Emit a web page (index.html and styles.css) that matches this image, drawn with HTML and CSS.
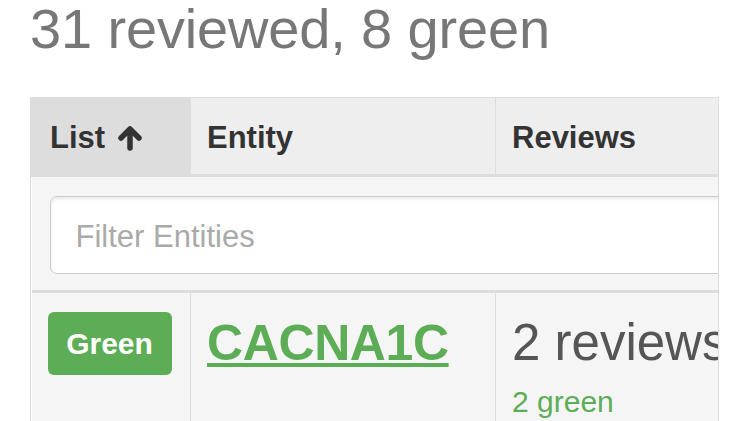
FILE: index.html
```html
<!DOCTYPE html>
<html>
<head>
<meta charset="utf-8">
<link rel="stylesheet" href="styles.css">
</head>
<body>
<h2 class="title">31 reviewed, 8 green</h2>
<div class="table-wrap">
  <table class="grid">
    <colgroup>
      <col class="c-list">
      <col class="c-entity">
      <col class="c-reviews">
    </colgroup>
    <thead>
      <tr class="head">
        <th class="sorted">List <svg class="arrow" viewBox="0 0 28 26" width="28" height="26"><path d="M14 23 V5 M5 13 L14 4 L23 13" fill="none" stroke="#333" stroke-width="5.5" stroke-linecap="round" stroke-linejoin="round"/></svg></th>
        <th>Entity</th>
        <th>Reviews</th>
      </tr>
      <tr class="filter">
        <td colspan="3"><input class="filter-input" type="text" placeholder="Filter Entities"></td>
      </tr>
    </thead>
    <tbody>
      <tr class="row">
        <td><span class="badge">Green</span></td>
        <td><a class="entity" href="#">CACNA1C</a></td>
        <td><div class="rev-count">2 reviews</div><div class="rev-green">2 green</div></td>
      </tr>
    </tbody>
  </table>
</div>
</body>
</html>
```

FILE: styles.css
```css
html, body {
  margin: 0;
  padding: 0;
  background: #fff;
}
body {
  padding: 0 31px 0 30px;
  font-family: "Liberation Sans", Arial, sans-serif;
  overflow: hidden;
}
.title {
  margin: 0;
  padding-top: 0;
  font-size: 56px;
  line-height: 57px;
  font-weight: normal;
  color: #777;
  height: 97px;
  white-space: nowrap;
  letter-spacing: -0.15px;
}
.table-wrap {
  width: 687px;
  border: 1px solid #ddd;
  overflow: hidden;
}
.grid {
  width: 1000px;
  table-layout: fixed;
  border-collapse: collapse;
}
.c-list { width: 159px; }
.c-entity { width: 305px; }
.c-reviews { width: 536px; }
.head th {
  height: 77px;
  padding: 5px 0 0 18px;
  text-align: left;
  vertical-align: middle;
  font-size: 31px;
  font-weight: bold;
  color: #333;
  background: #eee;
  border-left: 1px solid #ddd;
  border-bottom: 3px solid #ddd;
  box-sizing: border-box;
  white-space: nowrap;
}
.head th + th { padding-left: 16px; }
.head th.sorted { background: #ddd; }
.arrow {
  vertical-align: -3px;
  margin-left: 2px;
}
.filter td {
  background: #f5f5f5;
  padding: 19px 0 16px 18px;
  border-bottom: 3px solid #ddd;
}
.filter-input {
  display: block;
  box-sizing: border-box;
  width: 900px;
  height: 78px;
  margin: 0;
  padding: 4px 25px 0;
  border: 1px solid #ccc;
  border-radius: 7px;
  background: #fff;
  box-shadow: inset 0 2px 3px rgba(0,0,0,0.09);
  font-family: "Liberation Sans", Arial, sans-serif;
  font-size: 31px;
  color: #555;
  outline: none;
}
.filter-input::placeholder { color: #aaa; }
.row td {
  background: #f5f5f5;
  vertical-align: top;
  padding: 19px 0 20px 16px;
  border-left: 1px solid #ddd;
}
.row td:first-child { border-left: none; padding-left: 16px; }
.badge {
  display: inline-block;
  width: 124px;
  height: 63px;
  line-height: 63px;
  text-align: center;
  background: #5cad55;
  color: #fff;
  font-weight: bold;
  font-size: 30px;
  border-radius: 6px;
}
.entity {
  display: inline-block;
  margin-top: 3px;
  font-size: 50px;
  font-weight: bold;
  color: #5cad55;
  text-decoration: underline;
  text-decoration-thickness: 4px;
  text-underline-offset: 3px;
  letter-spacing: -0.4px;
  line-height: 56px;
}
.rev-count {
  margin-top: 3px;
  font-size: 51px;
  line-height: 56px;
  color: #555;
  white-space: nowrap;
}
.rev-green {
  margin-top: 15px;
  font-size: 30px;
  line-height: 32px;
  color: #5cad55;
  white-space: nowrap;
}
```
